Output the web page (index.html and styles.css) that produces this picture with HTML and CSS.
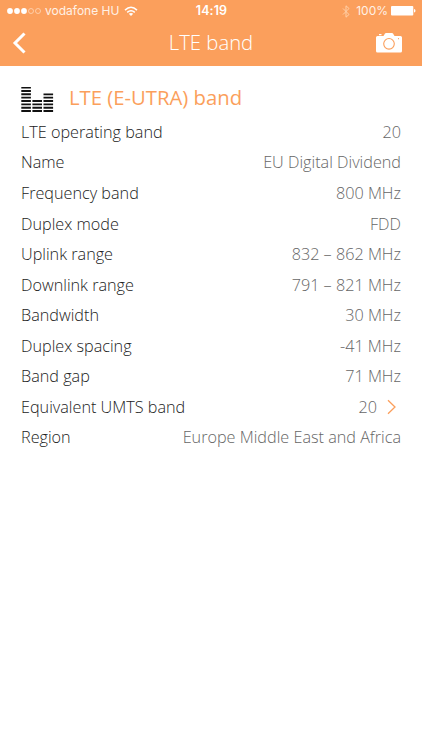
FILE: index.html
```html
<!DOCTYPE html>
<html lang="en">
<head>
<meta charset="utf-8">
<title>LTE band</title>
<link rel="stylesheet" href="styles.css">
</head>
<body>
<header class="header">
  <div class="status">
    <div class="carrier">
      <svg class="signal" width="34" height="8" viewBox="0 0 34 8"><g fill="#fff"><circle cx="3" cy="4" r="2.9"/><circle cx="10" cy="4" r="2.9"/><circle cx="17" cy="4" r="2.9"/></g><g fill="none" stroke="#ffdfc5" stroke-width=".7"><circle cx="24" cy="4" r="2.500"/><circle cx="31" cy="4" r="2.500"/></g></svg>
      <span class="operator">vodafone HU</span>
      <svg width="14" height="11" viewBox="0 0 14 11"><g fill="none" stroke="#fff" stroke-width="1.5"><path d="M1 4.100Q7-1.500 13 4.100M3.200 6.400Q7 3 10.800 6.400"/></g><path d="M4.800 7.800Q7 6 9.200 7.800L7 10.100z" fill="#fff"/></svg>
    </div>
    <div class="clock">14:19</div>
    <div class="power">
      <svg width="8" height="13" viewBox="0 0 8 13"><path d="M1 3.500l6 6-3 2.700V.8l3 2.700-6 6" fill="none" stroke="#ffd0a8" stroke-width="1"/></svg>
      <span class="percent">100%</span>
      <svg width="25" height="10" viewBox="0 0 25 10"><rect width="22.300" height="9.500" rx="1" fill="#fff"/><path d="M23 3q1.500 0 1.500 1.800T23 6.600z" fill="#fff"/></svg>
    </div>
  </div>
  <nav class="nav">
    <svg class="back" width="14" height="22" viewBox="0 0 14 22"><path d="M12.500 1.500L3 11l9.500 9.500" fill="none" stroke="#fff" stroke-width="3"/></svg>
    <h1 class="title">LTE band</h1>
    <svg class="camera" width="26" height="20" viewBox="0 0 26 20"><path d="M1.500 3H7.500l1.500-2.500Q9.300 0 10 0h6q.7 0 1 .5L18.500 3h6Q26 3 26 4.500v13.500q0 1.500-1.500 1.500h-23Q0 19.500 0 18V4.500Q0 3 1.500 3zM3 1h2.500v1.200H3z" fill="#fff"/><circle cx="13" cy="10.800" r="5.300" fill="#fff" stroke="#fb9f5c" stroke-width="1.100"/><circle cx="22.500" cy="5.700" r=".6" fill="#fb9f5c"/></svg>
  </nav>
</header>
<main class="content">
  <div class="heading">
    <svg width="33" height="26" viewBox="0 0 33 26"><g fill="none" stroke="#111" stroke-width="9.600" stroke-dasharray="1.900 1.450"><path d="M5.100 25V0M16.200 25V13M27.300 25V6.500"/></g></svg>
    <h2>LTE (E-UTRA) band</h2>
  </div>
  <dl class="details">
    <div class="row"><dt>LTE operating band</dt><dd>20</dd></div>
    <div class="row"><dt>Name</dt><dd>EU Digital Dividend</dd></div>
    <div class="row"><dt>Frequency band</dt><dd>800 MHz</dd></div>
    <div class="row"><dt>Duplex mode</dt><dd>FDD</dd></div>
    <div class="row"><dt>Uplink range</dt><dd>832 – 862 MHz</dd></div>
    <div class="row"><dt>Downlink range</dt><dd>791 – 821 MHz</dd></div>
    <div class="row"><dt>Bandwidth</dt><dd>30 MHz</dd></div>
    <div class="row"><dt>Duplex spacing</dt><dd>-41 MHz</dd></div>
    <div class="row"><dt>Band gap</dt><dd>71 MHz</dd></div>
    <div class="row"><dt>Equivalent UMTS band</dt><dd class="link">20<svg width="10" height="16" viewBox="0 0 10 16"><path d="M1 1.200L8 8 1 14.800" fill="none" stroke="#fb9f5c" stroke-width="1.300"/></svg></dd></div>
    <div class="row"><dt>Region</dt><dd>Europe Middle East and Africa</dd></div>
  </dl>
</main>
</body>
</html>
```
FILE: styles.css
```css
* { box-sizing: border-box; }
body {
  margin: 0;
  min-height: 750px;
  background: #fff;
  font-family: "Open Sans", sans-serif;
  font-weight: 300;
}
svg { display: block; flex: none; }
.header { height: 66px; background: #fb9f5c; color: #fff; }
.status {
  display: grid;
  grid-template-columns: 1fr auto 1fr;
  align-items: center;
  height: 22px;
  padding: 0 6px 0 7px;
  font: 400 12px/22px Inter, sans-serif;
}
.carrier, .power { display: flex; align-items: center; }
.carrier { gap: 4px; }
.operator { width: 75px; color: #fff1e6; white-space: nowrap; }
.clock { font-weight: 600; font-size: 12.5px; letter-spacing: .1px; }
.power { justify-content: flex-end; gap: 3px; }
.percent { margin-left: 3px; color: #fff1e6; }
.nav {
  display: grid;
  grid-template-columns: 1fr auto 1fr;
  align-items: center;
  height: 42px;
  padding: 0 20px 0 12px;
}
.title { margin: -3px 0 0 8px; font-size: 20.3px; line-height: 28px; font-weight: 300; }
.camera { justify-self: end; margin-top: -1px; }
.content { padding: 17px 21px 0; }
.heading { display: flex; align-items: center; gap: 15px; height: 33px; }
.heading h2 { margin: -6px 0 0; font-size: 20.3px; line-height: 28px; font-weight: 400; color: #fb9f5c; }
.details { margin: 0; padding-top: .6px; }
.row {
  display: flex;
  align-items: center;
  justify-content: space-between;
  height: 30.55px;
  font-size: 16.22px;
  line-height: 22px;
  white-space: nowrap;
}
.row dt { color: #222; }
.row dd { margin: 0; color: #666; }
.row .link { display: flex; align-items: center; gap: 10px; margin-right: 4px; }
```
